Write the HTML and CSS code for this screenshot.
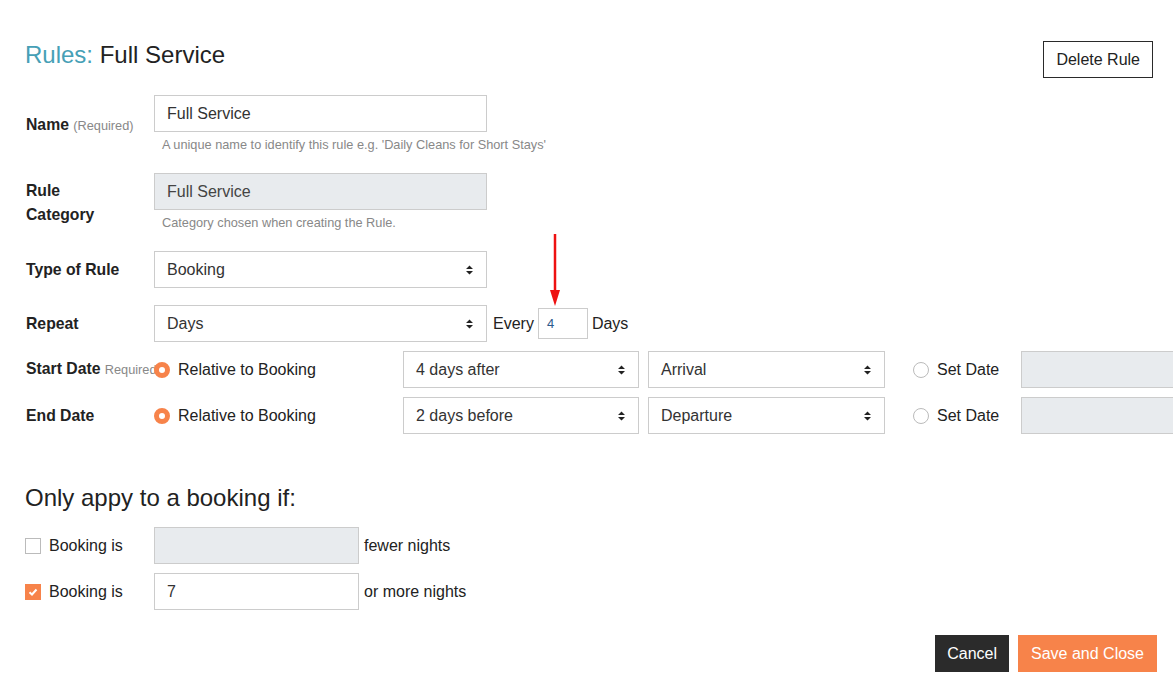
FILE: index.html
```html
<!DOCTYPE html>
<html lang="en">

<head>
    <meta charset="UTF-8">
    <meta name="viewport" content="width=device-width, initial-scale=1.0">
    <title>Rules: Full Service</title>
    <link rel="stylesheet" href="styles.css">
</head>

<body>
    <div class="page">
        <div class="page-header">
            <h1><span class="crumb">Rules:</span> Full Service</h1>
            <button class="btn btn-outline">Delete Rule</button>
        </div>

        <div class="form-row gap-name">
            <label class="row-label">Name <small>(Required)</small></label>
            <div class="field">
                <div class="text-input wide">Full Service</div>
                <div class="help">A unique name to identify this rule e.g. 'Daily Cleans for Short Stays'</div>
            </div>
        </div>

        <div class="form-row gap-category">
            <label class="row-label">Rule<br>Category</label>
            <div class="field">
                <div class="text-input wide disabled">Full Service</div>
                <div class="help">Category chosen when creating the Rule.</div>
            </div>
        </div>

        <div class="form-row gap-type">
            <label class="row-label">Type of Rule</label>
            <div class="select-box wide">
                <span>Booking</span>
                <svg class="caret" width="7" height="10" viewBox="0 0 7 10"><path d="M3.5 0.5 L7 4 L0 4 Z M0 6 L7 6 L3.5 9.5 Z" fill="#222"/></svg>
            </div>
        </div>

        <div class="form-row gap-repeat">
            <label class="row-label">Repeat</label>
            <div class="select-box wide">
                <span>Days</span>
                <svg class="caret" width="7" height="10" viewBox="0 0 7 10"><path d="M3.5 0.5 L7 4 L0 4 Z M0 6 L7 6 L3.5 9.5 Z" fill="#222"/></svg>
            </div>
            <span class="inline-text every">Every</span>
            <div class="text-input tiny">4</div>
            <span class="inline-text">Days</span>
        </div>

        <div class="form-row gap-date">
            <label class="row-label nowrap">Start Date <small>Required</small></label>
            <div class="radio-group relative">
                <span class="radio checked"></span>
                <span>Relative to Booking</span>
            </div>
            <div class="select-box offset">
                <span>4 days after</span>
                <svg class="caret" width="7" height="10" viewBox="0 0 7 10"><path d="M3.5 0.5 L7 4 L0 4 Z M0 6 L7 6 L3.5 9.5 Z" fill="#222"/></svg>
            </div>
            <div class="select-box anchor">
                <span>Arrival</span>
                <svg class="caret" width="7" height="10" viewBox="0 0 7 10"><path d="M3.5 0.5 L7 4 L0 4 Z M0 6 L7 6 L3.5 9.5 Z" fill="#222"/></svg>
            </div>
            <div class="radio-group set-date">
                <span class="radio"></span>
                <span>Set Date</span>
            </div>
            <div class="text-input date disabled"></div>
        </div>

        <div class="form-row gap-date">
            <label class="row-label">End Date</label>
            <div class="radio-group relative">
                <span class="radio checked"></span>
                <span>Relative to Booking</span>
            </div>
            <div class="select-box offset">
                <span>2 days before</span>
                <svg class="caret" width="7" height="10" viewBox="0 0 7 10"><path d="M3.5 0.5 L7 4 L0 4 Z M0 6 L7 6 L3.5 9.5 Z" fill="#222"/></svg>
            </div>
            <div class="select-box anchor">
                <span>Departure</span>
                <svg class="caret" width="7" height="10" viewBox="0 0 7 10"><path d="M3.5 0.5 L7 4 L0 4 Z M0 6 L7 6 L3.5 9.5 Z" fill="#222"/></svg>
            </div>
            <div class="radio-group set-date">
                <span class="radio"></span>
                <span>Set Date</span>
            </div>
            <div class="text-input date disabled"></div>
        </div>

        <h2 class="section-title">Only appy to a booking if:</h2>

        <div class="form-row">
            <label class="check-label">
                <span class="checkbox"></span>
                <span>Booking is</span>
            </label>
            <div class="text-input nights disabled"></div>
            <span class="inline-text">fewer nights</span>
        </div>

        <div class="form-row gap-date">
            <label class="check-label">
                <span class="checkbox checked">
                    <svg width="10" height="8" viewBox="0 0 10 8"><path d="M1.5 4.2 L4 6.5 L8.5 1.5" fill="none" stroke="#fff" stroke-width="2"/></svg>
                </span>
                <span>Booking is</span>
            </label>
            <div class="text-input nights">7</div>
            <span class="inline-text">or more nights</span>
        </div>

        <div class="form-actions">
            <button class="btn btn-dark">Cancel</button>
            <button class="btn btn-primary">Save and Close</button>
        </div>

        <!-- annotation arrow pointing at the repeat interval -->
        <svg class="annotation" width="12" height="74" viewBox="0 0 12 74">
            <line x1="6" y1="1" x2="6" y2="60" stroke="#ee1111" stroke-width="2.5"/>
            <polygon points="1,57 11,57 6,73" fill="#ee1111"/>
        </svg>
    </div>
</body>

</html>
```

FILE: styles.css
```css
* {
    margin: 0;
    padding: 0;
    box-sizing: border-box;
}

body {
    font-family: 'Liberation Sans', Arial, Helvetica, sans-serif;
    font-size: 15px;
    color: #222;
    background: #fff;
    overflow: hidden;
}

.page {
    position: relative;
    padding: 41px 20px 0 25px;
    min-height: 100vh;
}

.page-header {
    display: flex;
    justify-content: space-between;
    align-items: flex-start;
    margin-bottom: 17px;
}

.page-header h1 {
    font-size: 24px;
    font-weight: 400;
    color: #222;
}

.page-header .crumb {
    color: #46a0b6;
}

.btn {
    font-family: inherit;
    font-size: 16px;
    height: 37px;
    padding: 0 13px;
    border: none;
    cursor: pointer;
}

.btn-outline {
    background: #fff;
    color: #222;
    border: 1px solid #2a2a2a;
    padding: 0 12px;
}

.btn-dark {
    background: #2b2b2b;
    color: #fff;
    padding: 0 12px;
}

.btn-primary {
    background: #f7834a;
    color: #fff;
}

.form-row {
    display: flex;
    align-items: center;
    min-width: 1300px;
}

.gap-category {
    margin-top: 18px;
}

.gap-type {
    margin-top: 18px;
}

.gap-repeat {
    margin-top: 17px;
}

.gap-date {
    margin-top: 9px;
}

.row-label {
    flex: 0 0 129px;
    min-width: 0;
    font-weight: 700;
    font-size: 15.75px;
    line-height: 24px;
    color: #222;
    padding-left: 1px;
}

.row-label small {
    font-weight: 400;
    font-size: 12.75px;
    color: #888;
}

.row-label.nowrap {
    white-space: nowrap;
}

.field {
    display: flex;
    flex-direction: column;
}

.help {
    margin-top: 3px;
    padding-left: 8px;
    font-size: 12.75px;
    line-height: 20px;
    color: #888;
}

.text-input,
.select-box {
    height: 37px;
    border: 1px solid #ccc;
    background: #fff;
    font-size: 16px;
    color: #333;
    padding: 0 12px;
    display: flex;
    align-items: center;
}

.text-input.disabled {
    background: #e8ebee;
    color: #444;
}

.wide {
    width: 333px;
}

.select-box {
    justify-content: space-between;
    padding-right: 13px;
}

.caret {
    display: block;
}

.inline-text {
    font-size: 16px;
    margin-left: 5px;
}

.every {
    margin-left: 6px;
    margin-right: 5px;
}

.text-input.tiny {
    width: 50px;
    height: 31px;
    font-size: 13px;
    color: #2d5a8c;
    padding: 0 8px;
    margin-left: -1px;
    margin-right: -1px;
}

.radio-group {
    display: flex;
    align-items: center;
    gap: 8px;
    font-size: 16px;
}

.radio-group.relative {
    width: 249px;
}

.radio-group.set-date {
    width: 108px;
    margin-left: 28px;
}

.radio {
    width: 16px;
    height: 16px;
    border-radius: 50%;
    border: 1px solid #bbb;
    background: #fff;
    display: inline-block;
}

.radio.checked {
    border: 5px solid #f7834a;
    background: #fff;
}

.select-box.offset {
    width: 236px;
    margin-right: 9px;
}

.select-box.anchor {
    width: 237px;
}

.text-input.date {
    width: 200px;
}

.section-title {
    font-size: 24px;
    font-weight: 400;
    line-height: 25px;
    margin-top: 51px;
    margin-bottom: 17px;
    color: #222;
}

.check-label {
    flex: 0 0 129px;
    display: flex;
    align-items: center;
    gap: 8px;
    font-size: 16px;
}

.checkbox {
    width: 16px;
    height: 16px;
    border: 1px solid #bbb;
    background: #fff;
    display: flex;
    align-items: center;
    justify-content: center;
}

.checkbox.checked {
    background: #f7834a;
    border-color: #f7834a;
}

.text-input.nights {
    width: 205px;
    color: #333;
}

.form-actions {
    display: flex;
    justify-content: flex-end;
    gap: 9px;
    margin-top: 25px;
    margin-right: -4px;
}

.annotation {
    position: absolute;
    left: 549px;
    top: 233px;
}
```
